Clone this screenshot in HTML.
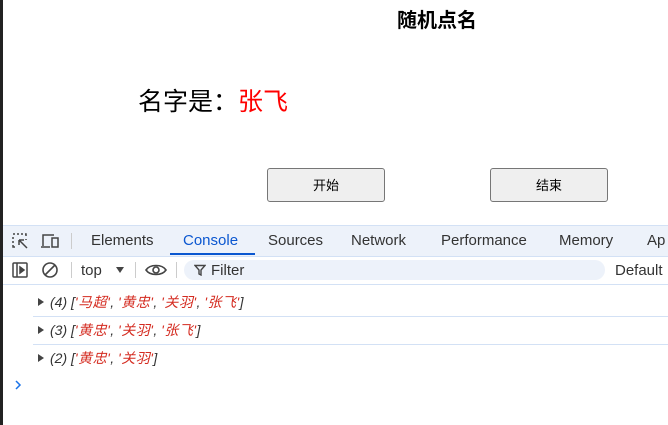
<!DOCTYPE html>
<html><head><meta charset="utf-8"><style>
body{margin:0;width:668px;height:425px;overflow:hidden;background:#fff;position:relative;font-family:"Liberation Sans","Noto Sans CJK SC",sans-serif}
.a{position:absolute}
.btn{position:absolute;top:168px;width:118px;height:34px;border:1px solid #767676;border-radius:3px;background:#efefef;font-size:13px;text-align:center;line-height:34px;color:#000;box-sizing:border-box}
.tab{position:absolute;top:232px;font-size:15px;color:#333}
.row{position:absolute;left:33px;right:0;height:27px;border-bottom:1px solid #d3e1f5;font-size:14px;font-style:italic;color:#333;line-height:27px}
.row span.s{color:#d42b20;letter-spacing:0.5px}
.tri{position:absolute;left:5px;top:9px;width:0;height:0;border-left:6px solid #444;border-top:4.5px solid transparent;border-bottom:4.5px solid transparent}
</style></head><body>
<div class="a" style="left:0;top:0;width:3px;height:425px;background:#222"></div>
<div class="a" style="left:397px;top:4px;font-size:20px;font-weight:bold">随机点名</div>
<div class="a" style="left:138px;top:82px;font-size:25px">名字是：<span style="color:red">张飞</span></div>
<div class="btn" style="left:267px">开始</div>
<div class="btn" style="left:490px">结束</div>

<div class="a" style="left:3px;right:0;top:225px;height:30px;background:#edf2fa;border-top:1px solid #d3e1f5;border-bottom:1px solid #d3e1f5"></div>
<svg class="a" style="left:11px;top:232px" width="18" height="18" viewBox="0 0 18 18" fill="none" stroke="#444" stroke-width="1.5"><path d="M2 2h2M6 2h2M10 2h2M14 2h1v2M2 5v2M2 9v2M2 13v2h2M15 7v1"/><path d="M8 8l8 8M8 8v5M8 8h5"/></svg>
<svg class="a" style="left:40px;top:232px" width="20" height="18" viewBox="0 0 20 18" fill="none" stroke="#444" stroke-width="1.5"><path d="M3 14V3h11M1 15h9"/><rect x="12" y="6" width="6" height="9"/></svg>
<div class="a" style="left:71px;top:233px;width:1px;height:16px;background:#ccc"></div>
<div class="tab" style="left:91px">Elements</div>
<div class="tab" style="left:183px;color:#0b57d0">Console</div>
<div class="a" style="left:170px;top:253px;width:85px;height:2px;background:#0b57d0"></div>
<div class="tab" style="left:268px">Sources</div>
<div class="tab" style="left:351px">Network</div>
<div class="tab" style="left:441px">Performance</div>
<div class="tab" style="left:559px">Memory</div>
<div class="tab" style="left:647px">Ap</div>

<div class="a" style="left:3px;right:0;top:284px;height:1px;background:#d3e1f5"></div>
<svg class="a" style="left:11px;top:261px" width="18" height="18" viewBox="0 0 18 18" fill="none" stroke="#444" stroke-width="1.5"><rect x="2" y="2" width="14" height="14" rx="1"/><path d="M6 2v14"/><path d="M9 6l4 3-4 3z" fill="#444"/></svg>
<svg class="a" style="left:41px;top:261px" width="18" height="18" viewBox="0 0 18 18" fill="none" stroke="#444" stroke-width="1.6"><circle cx="9" cy="9" r="7"/><path d="M4 14L14 4"/></svg>
<div class="a" style="left:71px;top:262px;width:1px;height:16px;background:#ccc"></div>
<div class="a" style="left:81px;top:262px;font-size:15px;color:#333">top</div>
<div class="a" style="left:116px;top:267px;border-top:6px solid #444;border-left:4px solid transparent;border-right:4px solid transparent"></div>
<div class="a" style="left:135px;top:262px;width:1px;height:16px;background:#ccc"></div>
<svg class="a" style="left:145px;top:262px" width="22" height="16" viewBox="0 0 22 16" fill="none" stroke="#444" stroke-width="1.6"><path d="M1 8C5 2 17 2 21 8C17 14 5 14 1 8z"/><circle cx="11" cy="8" r="3"/></svg>
<div class="a" style="left:176px;top:262px;width:1px;height:16px;background:#ccc"></div>
<div class="a" style="left:184px;top:260px;width:421px;height:20px;border-radius:10px;background:#edf2fa"></div>
<svg class="a" style="left:194px;top:264px" width="12" height="12" viewBox="0 0 12 12" fill="none" stroke="#444" stroke-width="1.4"><path d="M1 1.5h10L7 6v5L5 10V6z"/></svg>
<div class="a" style="left:211px;top:262px;font-size:15px;color:#333">Filter</div>
<div class="a" style="left:615px;top:262px;font-size:15px;color:#333">Default</div>

<div class="row" style="top:289px"><div class="tri"></div><span style="margin-left:17px">(4) [<span class="s">'马超'</span>, <span class="s">'黄忠'</span>, <span class="s">'关羽'</span>, <span class="s">'张飞'</span>]</span></div>
<div class="row" style="top:317px"><div class="tri"></div><span style="margin-left:17px">(3) [<span class="s">'黄忠'</span>, <span class="s">'关羽'</span>, <span class="s">'张飞'</span>]</span></div>
<div class="row" style="top:345px;border-bottom:none"><div class="tri"></div><span style="margin-left:17px">(2) [<span class="s">'黄忠'</span>, <span class="s">'关羽'</span>]</span></div>
<svg class="a" style="left:14px;top:380px" width="8" height="10" viewBox="0 0 8 10" fill="none" stroke="#1a73e8" stroke-width="1.5"><path d="M2 1l4 4-4 4"/></svg>
</body></html>
